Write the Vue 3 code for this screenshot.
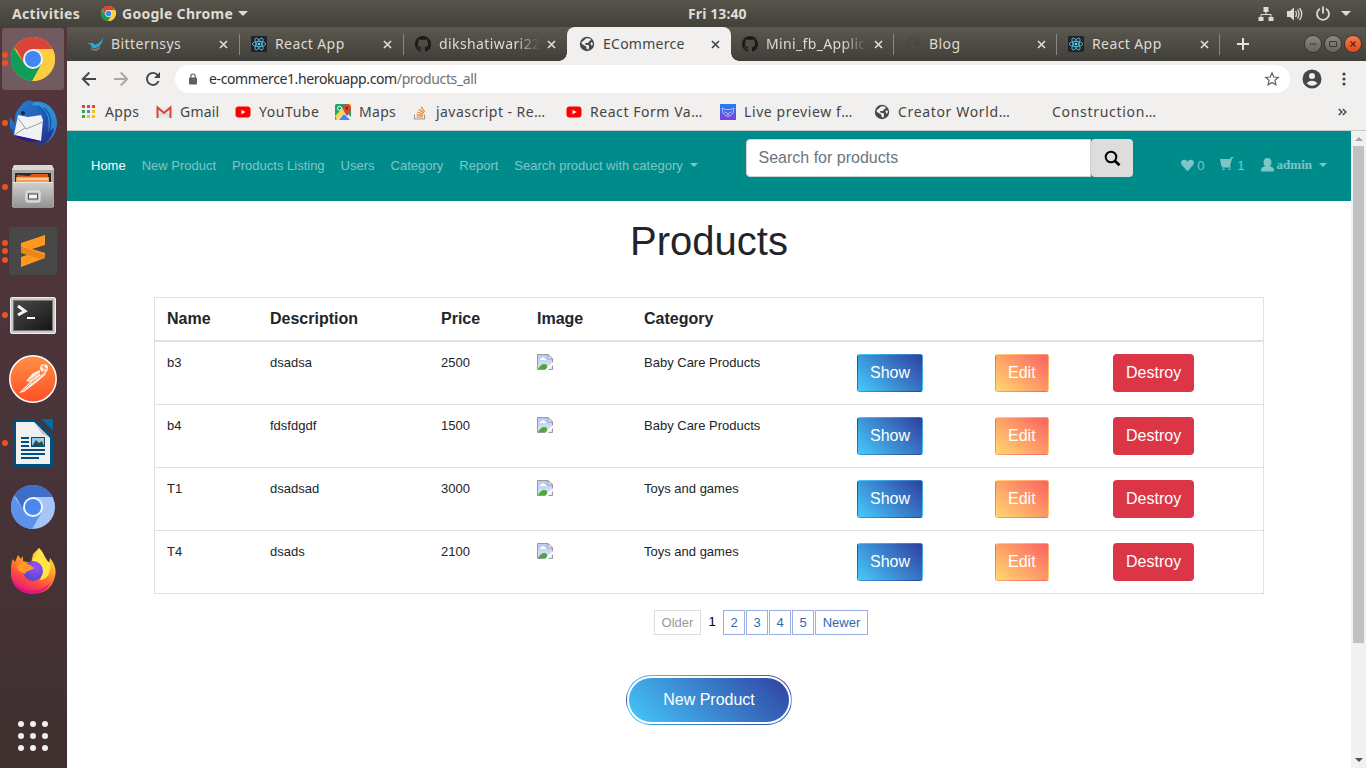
<script setup>
const tabs = [
  { title: 'Bitternsys', icon: 'bird', spacing: 0.45 },
  { title: 'React App', icon: 'react', spacing: 0.4 },
  { title: 'dikshatiwari22', icon: 'github', spacing: 0.4, fade: true },
  { title: 'ECommerce', icon: 'globe', spacing: 0.25, active: true },
  { title: 'Mini_fb_Applic', icon: 'github', spacing: 0.35, fade: true },
  { title: 'Blog', icon: 'globe-dim', spacing: 0.4 },
  { title: 'React App', icon: 'react', spacing: 0.4 }
]

const bookmarks = [
  { title: 'Apps', icon: 'apps', width: 75, spacing: 0.4 },
  { title: 'Gmail', icon: 'gmail', width: 79, spacing: 0.2 },
  { title: 'YouTube', icon: 'youtube', width: 100, spacing: 0.55 },
  { title: 'Maps', icon: 'maps', width: 77, spacing: 0.3 },
  { title: 'javascript - Re…', icon: 'stack', width: 154, spacing: 0.45 },
  { title: 'React Form Va…', icon: 'youtube', width: 154, spacing: 0.55 },
  { title: 'Live preview f…', icon: 'preview', width: 154, spacing: 0.6 },
  { title: 'Creator World…', icon: 'globe', width: 154, spacing: 0.65 },
  { title: 'Construction…', icon: '', width: 154, spacing: 0.7 }
]

const dock = [
  { icon: 'chrome', dots: 2, active: true },
  { icon: 'thunderbird', dots: 1 },
  { icon: 'files', dots: 1 },
  { icon: 'sublime', dots: 3 },
  { icon: 'terminal', dots: 1 },
  { icon: 'postman', dots: 0 },
  { icon: 'writer', dots: 1 },
  { icon: 'chromium', dots: 0 },
  { icon: 'firefox', dots: 0 }
]

const navLinks = ['Home', 'New Product', 'Products Listing', 'Users', 'Category', 'Report']

const products = [
  { name: 'b3', description: 'dsadsa', price: 2500, category: 'Baby Care Products' },
  { name: 'b4', description: 'fdsfdgdf', price: 1500, category: 'Baby Care Products' },
  { name: 'T1', description: 'dsadsad', price: 3000, category: 'Toys and games' },
  { name: 'T4', description: 'dsads', price: 2100, category: 'Toys and games' }
]
</script>

<template>
  <div class="desktop">
    <svg class="defs" width="0" height="0" aria-hidden="true">
      <defs>
        <linearGradient id="gPost" x1="0" y1="0" x2="0" y2="1"><stop offset="0" stop-color="#ff9044" /><stop offset="1" stop-color="#ff4f25" /></linearGradient>
        <linearGradient id="gGrey" x1="0" y1="0" x2="0" y2="1"><stop offset="0" stop-color="#d0d0ce" /><stop offset="1" stop-color="#929290" /></linearGradient>
        <linearGradient id="gTerm" x1="0" y1="0" x2="1" y2="1"><stop offset="0" stop-color="#4a4a4a" /><stop offset=".5" stop-color="#303030" /><stop offset="1" stop-color="#141414" /></linearGradient>
        <linearGradient id="gFox" x1=".8" y1="0" x2=".3" y2="1"><stop offset="0" stop-color="#fff04a" /><stop offset=".4" stop-color="#ff9d25" /><stop offset=".7" stop-color="#ff4b3f" /><stop offset="1" stop-color="#e5137f" /></linearGradient>
        <radialGradient id="gOrb" cx=".6" cy=".3" r=".8"><stop offset="0" stop-color="#9850ff" /><stop offset="1" stop-color="#4a48c4" /></radialGradient>
        <linearGradient id="gBird" x1="0" y1="0" x2="1" y2="1"><stop offset="0" stop-color="#2c83c9" /><stop offset=".5" stop-color="#1f5fbd" /><stop offset="1" stop-color="#2a1a78" /></linearGradient>
        <linearGradient id="gPrev" x1="0" y1="0" x2="0" y2="1"><stop offset="0" stop-color="#1f7ff0" /><stop offset="1" stop-color="#8440d8" /></linearGradient>
        <linearGradient id="gSky" x1="0" y1="0" x2="0" y2="1"><stop offset="0" stop-color="#b5c8f2" /><stop offset="1" stop-color="#dfe8fb" /></linearGradient>
      </defs>
      <symbol id="chrome" viewBox="0 0 44 44">
        <circle cx="22" cy="22" r="22" fill="#ffcd40" />
        <path d="M22 22L2.9 11A22 22 0 0 1 41.6 12H22Z" fill="#db4437" />
        <path d="M2.9 11A22 22 0 0 0 21.2 44L30.7 27L22 22L13.3 27Z" fill="#0f9d58" />
        <path d="M13.3 27L4 10L22 12Z" fill="#db4437" />
        <path d="M21.2 44L30.7 27L31.5 12H41.6A22 22 0 0 1 21.2 44Z" fill="#ffcd40" />
        <circle cx="22" cy="22" r="10" fill="#f1f1f1" /><circle cx="22" cy="22" r="8" fill="#4285f4" />
      </symbol>
      <symbol id="chromium" viewBox="0 0 44 44">
        <circle cx="22" cy="22" r="22" fill="#a6c5f8" />
        <path d="M22 22L2.9 11A22 22 0 0 1 41.6 12H22Z" fill="#3d6ec9" />
        <path d="M2.9 11A22 22 0 0 0 21.2 44L30.7 27L22 22L13.3 27Z" fill="#5b93ec" />
        <path d="M13.3 27L4 10L22 12Z" fill="#3d6ec9" />
        <circle cx="22" cy="22" r="10" fill="#f3f6fb" /><circle cx="22" cy="22" r="8" fill="#4a87ee" />
      </symbol>
      <symbol id="thunderbird" viewBox="0 0 48 48">
        <path d="M12 7C16 0 22 1 25 3C39 1 48 12 48 24C48 36 40 45 25 47L31 42L19 42L5 37C1 31 0 25 1 18L6 25C5 17 7 11 12 7Z" fill="url(#gBird)" />
        <path d="M23 6C37 7 41 17 39 33L45 29C43 38 39 42 35 45C43 41 48 33 48 24C48 12 38 1 25 3Z" fill="#39a5e8" opacity=".65" />
        <path d="M35 9C43 16 43 24 40 32M29 7C38 14 40 21 38 29" fill="none" stroke="#1554a6" stroke-width="1.3" />
        <path d="M9 16L19 18L32 16L34 21L32 42L19 39L5 36Z" fill="#f1f2f4" />
        <path d="M8 18L17 30L34 23M5 36L16 29" fill="none" stroke="#999fa8" stroke-width="1" />
        <path d="M5 36L2 28C2 36 8 41 23 43L32 42Z" fill="#30207e" />
        <circle cx="14" cy="14" r="2" fill="#14263e" />
      </symbol>
      <symbol id="files" viewBox="0 0 48 48">
        <path d="M5 2H43L45 6V44H3V6Z" fill="#aaa9a7" /><path d="M5 2H43L45 7H3Z" fill="#d8d8d7" />
        <path d="M6 10H42V20H6Z" fill="#352824" /><path d="M8 12L20 13L23 11H39V20H8Z" fill="#d65a18" /><path d="M7 14H40V20H7Z" fill="#f49b50" /><path d="M8 16H39" stroke="#fff0ce" />
        <path d="M4 19H44V45H4Z" fill="url(#gGrey)" /><path d="M4 19.5H44" stroke="#e9e9e8" />
        <rect x="17" y="28" width="14" height="11" rx="1.5" fill="#c9c9c7" stroke="#ededed" /><rect x="19.5" y="31" width="9" height="5" fill="#f4f4f4" stroke="#454545" />
      </symbol>
      <symbol id="sublime" viewBox="0 0 48 48">
        <rect width="48" height="48" rx="3" fill="#484848" />
        <path d="M12 16L36 8V18L23 22L36 26V31L12 40V30L26 25L12 20Z" fill="#ff9821" /><path d="M12 20L36 28V31L30 32L12 26Z" fill="#e98618" />
      </symbol>
      <symbol id="terminal" viewBox="0 0 48 48">
        <rect x="1.5" y="6.5" width="45" height="36" rx="1.5" fill="#c8c8c7" stroke="#efefee" /><rect x="4.500" y="9.500" width="39" height="30" fill="url(#gTerm)" stroke="#777" />
        <path d="M9 15L16 20L9 24" fill="none" stroke="#f3f3f3" stroke-width="3" /><path d="M18 27H26" stroke="#fff" stroke-width="2" />
      </symbol>
      <symbol id="postman" viewBox="0 0 48 48">
        <circle cx="24" cy="24" r="23.2" fill="url(#gPost)" stroke="#fff" stroke-width="1.5" />
        <circle cx="35" cy="13" r="4" fill="#fff0e8" /><path d="M32 11L38 14M35 9L35 17" stroke="#ff7437" stroke-width=".9" />
        <path d="M31 15L24 18L17 26L21 27L12 36L10 38L15 37L28 27L36 20L38 16L31 20Z" fill="#ffe9de" />
        <path d="M20 26L32 17M23 28L35 18M14 36L26 24" stroke="#ff8b58" stroke-width=".9" />
      </symbol>
      <symbol id="writer" viewBox="0 0 48 48">
        <path d="M4 2Q4 0 6 0H26L44 17V46Q44 48 42 48H6Q4 48 4 46Z" fill="#00507e" /><path d="M32 0H42Q44 0 44 2V12Z" fill="#0369a3" />
        <path d="M7 3H25L41 19V45H7Z" fill="#f0f0f0" /><path d="M25 3L41 19L33 15Z" fill="#c9c9c9" />
        <path d="M12 19H20M12 23H20M12 27H20M12 31H36M12 35H36M12 39H30" stroke="#00507e" stroke-width="2" />
        <rect x="22.5" y="18.5" width="13" height="9" fill="#8ccdf1" stroke="#00507e" /><path d="M23 27L27 21L30 24L33 22L35 27Z" fill="#3d4545" /><circle cx="33" cy="20.5" r="1.3" fill="#efd33e" />
      </symbol>
      <symbol id="firefox" viewBox="0 0 48 48">
        <path d="M4 13L6 16L9 9L12 13L14 10V15L22 17L24 8L30 2L33 12L40 17L41 12C47 19 48 27 45 34C42 43 34 48 24 48C10 48 1 38 2 25C2 20 2 17 4 13Z" fill="url(#gFox)" />
        <path d="M23 15C26 8 29 9 30 2C35 6 36 14 41 17C43 26 38 34 31 34C34 27 34 21 23 15Z" fill="#ffe445" />
        <circle cx="24" cy="25" r="10" fill="url(#gOrb)" /><path d="M8 20L14 16L21 19L25 22C22 25 17 24 16 28C12 26 8 24 8 20Z" fill="#ff9a24" />
        <path d="M4 34C13 48 31 48 42 36C37 45 30 48 24 48C15 48 8 44 4 34Z" fill="#dc0c86" opacity=".7" />
      </symbol>
      <symbol id="bird" viewBox="0 0 16 16">
        <path d="M0 7L6 7L8 9Q14 7 16 1Q16 9 9 12Q5 13 4 9Z" fill="#23a9e4" /><path d="M4 10Q3 15 9 15Q14 14 13 9Q11 13 7 13Q5 13 4 10Z" fill="#72777a" />
      </symbol>
      <symbol id="react" viewBox="0 0 16 16">
        <rect width="16" height="16" rx="1" fill="#20232a" /><g fill="none" stroke="#58c4dc" stroke-width=".85"><ellipse cx="8" cy="8" rx="6.7" ry="2.6" /><ellipse cx="8" cy="8" rx="6.7" ry="2.6" transform="rotate(60 8 8)" /><ellipse cx="8" cy="8" rx="6.7" ry="2.6" transform="rotate(120 8 8)" /></g><circle cx="8" cy="8" r="1.3" fill="#61dafb" />
      </symbol>
      <symbol id="github" viewBox="0 0 16 16">
        <path fill="#1b1b1b" d="M8 0C3.58 0 0 3.58 0 8c0 3.54 2.29 6.53 5.47 7.59.4.07.55-.17.55-.38 0-.19-.01-.82-.01-1.49-2.01.37-2.53-.49-2.69-.94-.09-.23-.48-.94-.82-1.13-.28-.15-.68-.52-.01-.53.63-.01 1.08.58 1.23.82.72 1.21 1.87.87 2.33.66.07-.52.28-.87.51-1.07-1.78-.2-3.64-.89-3.64-3.95 0-.87.31-1.59.82-2.15-.08-.2-.36-1.02.08-2.12 0 0 .67-.21 2.2.82.64-.18 1.32-.27 2-.27s1.36.09 2 .27c1.53-1.04 2.2-.82 2.2-.82.44 1.1.16 1.92.08 2.12.51.56.82 1.27.82 2.15 0 3.07-1.87 3.75-3.65 3.95.29.25.54.73.54 1.48 0 1.07-.01 1.93-.01 2.2 0 .21.15.46.55.38A8.01 8.01 0 0 0 16 8c0-4.42-3.58-8-8-8Z" />
      </symbol>
      <symbol id="globe" viewBox="0 0 16 16">
        <circle cx="8" cy="8" r="7.2" fill="#48484a" /><path d="M7.3 2.3L11 2.6L12 4L10.2 5.3L9 7H6L6.8 9H9.5Q11 11 9.3 13.8L7.8 13L7.2 10.4L3 8L2.4 6.5L5 4.2Z" fill="#f1f0ef" /><path d="M12.3 6L14 7.5L13 10L11.4 8Z" fill="#f1f0ef" />
      </symbol>
      <symbol id="globe-dim" viewBox="0 0 16 16">
        <circle cx="8" cy="8" r="7.2" fill="#484847" /><path d="M7.3 2.3L11 2.6L12 4L10.2 5.3L9 7H6L6.8 9H9.5Q11 11 9.3 13.8L7.8 13L7.2 10.4L3 8L2.4 6.5L5 4.2Z" fill="#504e47" />
      </symbol>
      <symbol id="apps" viewBox="0 0 16 16">
        <g><path d="M1 1h3v3H1zM6 1h3v3H6z" fill="#ea4335" /><path d="M11 1h3v3h-3z" fill="#ea4335" /><path d="M1 6h3v3H1z" fill="#34a853" /><path d="M6 6h3v3H6z" fill="#4285f4" /><path d="M11 6h3v3h-3z" fill="#fbbc05" /><path d="M1 11h3v3H1z" fill="#34a853" /><path d="M6 11h3v3H6zM11 11h3v3h-3z" fill="#fbbc05" /></g>
      </symbol>
      <symbol id="gmail" viewBox="0 0 16 16">
        <path d="M1 3H15V14H1Z" fill="#e8e8e8" /><path d="M2 13L8 8L14 13" fill="none" stroke="#c9c9c9" /><path d="M1.5 14V3.5L8 9L14.5 3.5V14" fill="none" stroke="#db4437" stroke-width="2" />
      </symbol>
      <symbol id="youtube" viewBox="0 0 16 16"><rect x=".5" y="2.5" width="15" height="11" rx="3" fill="#f00" /><path d="M6.5 5.8L10.500 8L6.500 10.200Z" fill="#fff" /></symbol>
      <symbol id="maps" viewBox="0 0 16 16">
        <rect width="16" height="16" rx="1.5" fill="#1fa463" /><path d="M1 16L10 7L16 13V16Z" fill="#e8eaed" /><path d="M0 12L12 0H16V3L2 16Z" fill="#ffd64b" /><path d="M4 16L9 10L15 16Z" fill="#4285f4" /><circle cx="4.5" cy="4.3" r="2" fill="none" stroke="#fff" /><path d="M12 0Q16 0 16 4Q16 7 12 12Q8 7 8 4Q8 0 12 0Z" fill="#db4437" /><circle cx="12" cy="4" r="1.5" fill="#7c2723" />
      </symbol>
      <symbol id="stack" viewBox="0 0 16 16"><path d="M2.5 10.500V15H12.500V10.500" fill="none" stroke="#999" stroke-width="1.1" /><path d="M4.500 13H10.800M4.600 10.700L10.900 11.600M5.300 8L11.200 10.200M6.900 5.200L11.900 9M9.200 2.800L12.700 8" stroke="#f48024" stroke-width="1.200" /></symbol>
      <symbol id="preview" viewBox="0 0 16 16"><rect width="16" height="16" fill="url(#gPrev)" /><path d="M2 4L5 5.500H11L14 4L13 9L10 12H6L3 9ZM4.500 8L7 9L8 11L9 9L11.500 8" fill="none" stroke="#bcd6ff" stroke-width=".8" /></symbol>
      <symbol id="broken" viewBox="0 0 16 16">
        <path d="M.5 .5H11L15.5 5V15.5H.5Z" fill="url(#gSky)" stroke="#999" /><path d="M11 .5V5H15.5Z" fill="#fff" stroke="#999" /><path d="M3 6Q3 4 5 4Q6 2 7 4Q9 4 9 6Z" fill="#fff" />
        <path d="M1 15Q5 8 10 11V15Z" fill="#4ea83a" /><path d="M8 16L16 8V11L11 16Z" fill="#fff" />
      </symbol>
    </svg>

    <header class="panel">
      <div class="panel-left">
        <span class="activities">Activities</span>
        <svg class="panel-chrome" width="15" height="15"><use href="#chrome" /></svg>
        <span class="appname">Google Chrome</span>
        <i class="panel-caret"></i>
      </div>
      <span class="clock">Fri 13:40</span>
      <div class="panel-right">
        <svg width="16" height="16" viewBox="0 0 16 16"><path d="M5.5 1H10.500V6H5.500ZM.5 11H5.500V15H.5ZM10.500 11H15.500V15H10.500Z" fill="#dfdbd2" /><path d="M8 6V8.500M3 11V8.500H13V11" fill="none" stroke="#dfdbd2" /></svg>
        <svg width="17" height="16" viewBox="0 0 17 16"><path d="M1 5H4L8 1.500V14.500L4 11H1Z" fill="#dfdbd2" /><path d="M9.500 5Q11.500 8 9.500 11M11.500 3.500Q14.500 8 11.500 12.500M13.500 2Q18 8 13.500 14" fill="none" stroke="#dfdbd2" stroke-width="1.3" /></svg>
        <svg width="16" height="16" viewBox="0 0 16 16"><path d="M5 2.700A6 6 0 1 0 11 2.700M8 .5V7.500" fill="none" stroke="#dfdbd2" stroke-width="1.800" /></svg>
        <i class="panel-caret"></i>
      </div>
    </header>

    <div class="workspace">
      <aside class="dock">
        <div v-for="item in dock" :key="item.icon" class="dock-item" :class="{ current: item.active }">
          <span class="dots"><i v-for="n in item.dots" :key="n"></i></span>
          <svg :class="['dock-icon', item.icon]"><use :href="'#' + item.icon" /></svg>
        </div>
        <div class="launcher"><i v-for="n in 9" :key="n"></i></div>
      </aside>

      <section class="browser">
        <div class="tabstrip">
          <div v-for="(tab, i) in tabs" :key="i" class="tab" :class="{ active: tab.active, last: i === 2 }">
            <svg class="tab-icon" width="16" height="16"><use :href="'#' + tab.icon" /></svg>
            <span class="tab-title" :class="{ fade: tab.fade }" :style="{ letterSpacing: tab.spacing + 'px' }">{{ tab.title }}</span>
            <svg class="tab-close" width="9" height="9" viewBox="0 0 9 9"><path d="M1 1L8 8M8 1L1 8" stroke="currentColor" stroke-width="1.700" /></svg>
          </div>
          <svg class="newtab" width="12" height="12" viewBox="0 0 12 12"><path d="M6 0V12M0 6H12" stroke="#e6e3dc" stroke-width="2" /></svg>
          <div class="winbuttons">
            <svg viewBox="0 0 16 16"><path d="M4.500 8H11.500" stroke="#3a3935" /></svg>
            <svg viewBox="0 0 16 16"><path d="M4.500 5.500H11.500V10.500H4.500Z" fill="none" stroke="#3a3935" /></svg>
            <svg class="close" viewBox="0 0 16 16"><path d="M5.500 5.500L10.500 10.500M10.500 5.500L5.500 10.500" stroke="#64220c" stroke-width="1.200" /></svg>
          </div>
        </div>

        <div class="toolbar">
          <svg width="16" height="16" viewBox="0 0 16 16"><path d="M15 8H2M8.300 1.500L1.800 8L8.300 14.500" fill="none" stroke="#454545" stroke-width="1.900" /></svg>
          <svg width="16" height="16" viewBox="0 0 16 16"><path d="M1 8H14M7.700 1.500L14.200 8L7.700 14.500" fill="none" stroke="#a9a8a6" stroke-width="1.900" /></svg>
          <svg width="16" height="16" viewBox="0 0 16 16"><path d="M13.600 10A6 6 0 1 1 12.700 4.200L14 5.800" fill="none" stroke="#454545" stroke-width="1.900" /><path d="M15 1V7H9Z" fill="#454545" /></svg>
          <div class="omnibox">
            <svg width="10" height="12" viewBox="0 0 10 12"><rect x="1" y="4.500" width="8" height="7" rx="1" fill="#5f6060" /><path d="M2.800 5V3.200A2.200 2.200 0 0 1 7.200 3.200V5" fill="none" stroke="#5f6060" stroke-width="1.200" /></svg>
            <span class="url">e-commerce1.herokuapp.com<span>/products_all</span></span>
            <svg class="star" width="16" height="16" viewBox="0 0 16 16"><path d="M8 1.800L9.800 6L14.300 6.400L10.900 9.400L11.900 13.800L8 11.500L4.100 13.800L5.100 9.400L1.700 6.400L6.200 6Z" fill="none" stroke="#5f6060" stroke-width="1.200" /></svg>
          </div>
          <svg class="avatar" width="20" height="20" viewBox="0 0 20 20"><circle cx="10" cy="10" r="9.500" fill="#454545" /><circle cx="10" cy="7" r="3" fill="#f1f0ef" /><path d="M4.500 14.200Q10 9.500 15.500 14.200Q10 19.500 4.500 14.200Z" fill="#f1f0ef" /></svg>
          <svg width="4" height="16" viewBox="0 0 4 16"><g fill="#454545"><circle cx="2" cy="3" r="1.600" /><circle cx="2" cy="8" r="1.600" /><circle cx="2" cy="13" r="1.600" /></g></svg>
        </div>

        <div class="bookmarks">
          <div v-for="b in bookmarks" :key="b.title" class="bookmark" :style="{ width: b.width + 'px' }">
            <svg width="16" height="16"><use v-if="b.icon" :href="'#' + b.icon" /></svg>
            <span :style="{ letterSpacing: b.spacing + 'px' }">{{ b.title }}</span>
          </div>
          <svg class="more" width="9" height="8" viewBox="0 0 9 8"><path d="M.8 1L3.800 4L.8 7M4.800 1L7.800 4L4.800 7" fill="none" stroke="#454545" stroke-width="1.500" /></svg>
        </div>

        <div class="viewport">
          <main class="page">
            <nav class="navbar">
              <div class="links">
                <a v-for="(link, i) in navLinks" :key="link" :class="{ on: i === 0 }">{{ link }}</a>
                <a>Search product with category<i class="caret"></i></a>
              </div>
              <form class="search" @submit.prevent>
                <input type="text" placeholder="Search for products">
                <button type="submit"><svg width="17" height="17" viewBox="0 0 17 17"><circle cx="7" cy="7" r="5.300" fill="none" stroke="#000" stroke-width="2" /><path d="M10.500 10.500L15.500 15.300" stroke="#000" stroke-width="2.800" /></svg></button>
              </form>
              <div class="account">
                <a><svg width="13" height="13" viewBox="0 0 13 13"><path d="M6.500 12.300L1 6.300C-1.200 3.500.8.700 3.300.8C4.800.8 5.900 1.700 6.500 2.700C7.100 1.700 8.200.8 9.700.8C12.200.7 14.200 3.500 12 6.300Z" fill="currentColor" /></svg>0</a>
                <a><svg class="cart" width="14" height="14" viewBox="0 0 14 14"><path d="M0 2H10.200L11 0H13.500V1.200H12L10 9.500H11V10.500H2V9.500L1.200 8.500Z" fill="currentColor" /><path d="M2.500 11.500H4.500V13H2.500ZM8.500 11.500H10.500V13H8.500Z" fill="currentColor" /></svg>1</a>
                <a class="user"><svg width="13" height="14" viewBox="0 0 13 14"><path d="M6.500 0Q10.500 0 10.500 4.500Q10.500 7 8.800 8.300L12 9.500Q13 10 13 13.500H0Q0 10 1 9.500L4.200 8.300Q2.500 7 2.500 4.500Q2.500 0 6.500 0Z" fill="currentColor" /></svg>admin<i class="caret"></i></a>
              </div>
            </nav>

            <h1>Products</h1>

            <div class="table">
              <div class="row head"><b>Name</b><b>Description</b><b>Price</b><b>Image</b><b>Category</b><b></b><b></b><b></b></div>
              <div v-for="p in products" :key="p.name" class="row">
                <span>{{ p.name }}</span>
                <span>{{ p.description }}</span>
                <span>{{ p.price }}</span>
                <span><svg class="noimg" width="16" height="16"><use href="#broken" /></svg></span>
                <span>{{ p.category }}</span>
                <span><a class="btn show">Show</a></span>
                <span><a class="btn edit">Edit</a></span>
                <span><a class="btn destroy">Destroy</a></span>
              </div>
            </div>

            <div class="pager">
              <span class="disabled">Older</span><em>1</em><a v-for="n in [2, 3, 4, 5]" :key="n">{{ n }}</a><a class="newer">Newer</a>
            </div>

            <a class="newproduct">New Product</a>
          </main>
          <div class="scrollbar"><i class="up"></i><div class="thumb"></div><i class="down"></i></div>
        </div>
      </section>
    </div>
  </div>
</template>

<style>
html, body { margin: 0; overflow: hidden; }
</style>

<style scoped>
* { box-sizing: border-box; }
.desktop { width: 1366px; height: 768px; display: flex; flex-direction: column; overflow: hidden; background: #fff; font-family: "Noto Sans", sans-serif; }
.defs { position: absolute; }
svg { display: block; flex: none; }

.panel { height: 27px; display: grid; grid-template-columns: 688px auto 1fr; align-items: center; background: linear-gradient(#57544c, #42413a); color: #dfdbd2; font-size: 14px; font-weight: 700; line-height: 26px; white-space: nowrap; }
.panel-left { display: flex; align-items: center; padding-left: 12px; }
.activities { width: 89px; letter-spacing: .3px; }
.panel-chrome { margin-right: 6px; }
.appname { width: 111px; letter-spacing: .28px; }
.panel-caret { border: 5px solid transparent; border-top-color: #dfdbd2; border-bottom: 0; margin-left: 5px; }
.clock { letter-spacing: .1px; }
.panel-right { display: flex; justify-content: flex-end; align-items: center; padding-right: 15px; }
.panel-right svg { margin-left: 12px; }
.panel-right .panel-caret { margin-left: 10px; }

.workspace { flex: 1; display: flex; min-height: 0; }
.dock { width: 67px; flex: none; display: flex; flex-direction: column; gap: 2px; padding: 1px 3px 0 2px; background: linear-gradient(#53363b, #493439 55%, #40302f); }
.dock-item { height: 62px; width: 62px; display: flex; align-items: center; justify-content: center; position: relative; border-radius: 3px; }
.dock-item.current { background: #725b60; }
.dock-icon { width: 48px; height: 48px; }
.dock-icon.chrome, .dock-icon.chromium { width: 44px; height: 44px; }
.dock-icon.firefox { margin-bottom: 3px; }
.dots { position: absolute; left: 0; top: 0; height: 100%; display: flex; flex-direction: column; justify-content: center; gap: 2.500px; }
.dots i { width: 6px; height: 6px; border-radius: 50%; background: #e95420; }
.launcher { margin: auto 0 17px 16px; display: grid; grid-template-columns: repeat(3, 6px); gap: 6px; }
.launcher i { width: 6px; height: 6px; border-radius: 50%; background: #f2f1f0; }

.browser { flex: 1; min-width: 0; display: flex; flex-direction: column; background: #f1f0ef; }
.tabstrip { height: 34px; display: flex; align-items: center; padding-left: 10px; background: linear-gradient(#5b584f, #403f39); color: #dfdbd2; }
.tab { position: relative; flex: none; width: 163px; height: 34px; display: flex; align-items: center; padding-left: 11px; font-size: 14px; }
.tab:first-child { padding-left: 10px; }
.tab:nth-child(2) { width: 164px; }
.tab:nth-child(3) { padding-left: 11px; }
.tab::after { content: ""; position: absolute; right: 0; top: 7px; width: 1px; height: 21px; background: #8a877e; }
.tab.last::after { display: none; }
.tab-title { margin-left: 8px; width: 101px; overflow: hidden; white-space: nowrap; line-height: 22px; }
.tab-title.fade { -webkit-mask-image: linear-gradient(to right, #000 76%, transparent); mask-image: linear-gradient(to right, #000 76%, transparent); }
.tab-close { margin-left: 7px; }
.tab.active { background: #f1f0ef; color: #454545; border-radius: 8px 8px 0 0; width: 164px; padding-left: 12px; }
.tab.active::before, .tab.active::after { content: ""; display: block; position: absolute; top: auto; bottom: 0; width: 8px; height: 8px; }
.tab.active::before { left: -8px; background: radial-gradient(circle at 0 0, transparent 7.500px, #f1f0ef 8px); }
.tab.active::after { right: -8px; background: radial-gradient(circle at 100% 0, transparent 7.500px, #f1f0ef 8px); }
.newtab { margin-left: 17px; }
.winbuttons { margin-left: auto; padding-right: 5px; display: flex; gap: 4px; }
.winbuttons svg { width: 16px; height: 16px; border-radius: 50%; background: linear-gradient(#8b897f, #65635b); box-shadow: 0 0 0 1px #35342f; }
.winbuttons .close { background: linear-gradient(#f47b50, #dd4815); }

.toolbar { height: 36px; display: flex; align-items: center; padding: 0 20px 0 14px; }
.toolbar > svg { margin-right: 16px; }
.toolbar > svg:nth-of-type(3) { margin-right: 14px; }
.omnibox { flex: 1; height: 28px; border-radius: 14px; background: #fff; display: flex; align-items: center; padding: 0 10px 0 13px; }
.url { margin-left: 11px; font-size: 14px; line-height: 20px; padding-bottom: 1px; color: #303030; white-space: nowrap; letter-spacing: -.38px; }
.url span { color: #73726f; }
.star { margin-left: auto; }
.toolbar > .avatar { margin: 0 20px 0 12px; }
.toolbar > svg:last-child { margin-right: 0; }
.bookmarks { height: 34px; display: flex; align-items: center; padding: 0 19px 4px 14px; border-bottom: 1px solid #cbcac8; color: #454545; font-size: 14px; }
.bookmark { display: flex; align-items: center; gap: 8px; white-space: nowrap; flex: none; line-height: 20px; }
.more { margin-left: auto; }

.viewport { flex: 1; display: flex; min-height: 0; background: #fff; font-family: "Liberation Sans", Arial, sans-serif; color: #212529; }
.page { flex: 1; display: flex; flex-direction: column; align-items: center; }
.navbar { height: 70px; width: 1284px; flex: none; background: #008b8b; display: flex; align-items: center; padding: 0 16px 2px; font-size: 13px; color: rgba(255, 255, 255, .5); white-space: nowrap; }
.navbar a { padding: 0 8px; display: flex; align-items: center; }
.links { display: flex; width: 663px; }
.links .on { color: #fff; }
.caret { border: 4px solid transparent; border-top-color: currentColor; border-bottom: 0; margin-left: 7px; }
.search { display: flex; height: 38px; align-self: flex-start; margin: 8px 0 0; }
.search input { width: 345px; height: 38px; padding: 0 12px 0 11.500px; border: 1px solid #ced4da; border-radius: 4px 0 0 4px; background: #fff; font: 16px "Liberation Sans", sans-serif; outline: 0; }
.search input::placeholder { color: #6c757d; opacity: 1; }
.search button { width: 42px; height: 38px; padding: 0; border: 0; border-radius: 4px; background: #ddd; display: flex; align-items: center; justify-content: center; }
.account { display: flex; margin-left: auto; }
.account svg { margin-right: 3px; }
.account .cart { margin-bottom: 3px; }
.account .user { font-family: "Liberation Serif", serif; font-weight: 700; }

h1 { margin: 16px 0 32px; font-size: 40px; line-height: 48px; font-weight: 400; }
.table { width: 1110px; border: 1px solid #dee2e6; }
.row { display: grid; grid-template-columns: 103px 171px 96px 107px 213px 138px 118px 162px; height: 63px; padding-top: 12px; border-top: 1px solid #dee2e6; font-size: 13px; line-height: 17px; }
.row > * { padding-left: 12px; }
.row.head { height: 42px; padding-top: 9px; border-top: 0; font-size: 16px; line-height: 24px; }
.row.head + .row { border-top-width: 2px; height: 64px; }
.btn { display: inline-block; height: 38px; padding: 6px 12px; border: 1px solid transparent; border-radius: 4px; color: #fff; font-size: 16px; line-height: 24px; }
.show { background: linear-gradient(45deg, #45cafc, #303f9f); border-radius: 3px; }
.edit { background: linear-gradient(40deg, #ffd86f, #fc6262); border-radius: 3px; }
.destroy { background: #dc3545; }
.pager { display: flex; gap: 1px; margin: 16px 0 0 104px; font-size: 13px; line-height: 23px; text-align: center; }
.pager a, .pager span { width: 22px; height: 25px; border: 1px solid #9aafe5; color: #2e6ab1; }
.pager .disabled { width: 47px; border-color: #ddd; color: #999; }
.pager .newer { width: 53px; }
.pager em { font-style: normal; width: 20px; text-align: center; color: #000; }
.newproduct { margin-top: 40px; width: 166px; height: 50px; border: 1px solid transparent; border-radius: 25px; background: linear-gradient(45deg, #45cafc, #303f9f); box-shadow: inset 0 0 0 2px #fff; color: #fff; font-size: 16px; line-height: 48px; text-align: center; }

.scrollbar { width: 15px; display: flex; flex-direction: column; align-items: center; background: #f1f1f1; }
.scrollbar .up { border: 4px solid transparent; border-bottom-color: #a3a3a3; border-top: 0; margin: 6px 0 5px; }
.thumb { width: 11px; height: 497px; background: #c1c1c1; }
.scrollbar .down { border: 4px solid transparent; border-top-color: #505050; border-bottom: 0; margin: auto 0 6px; }
</style>
